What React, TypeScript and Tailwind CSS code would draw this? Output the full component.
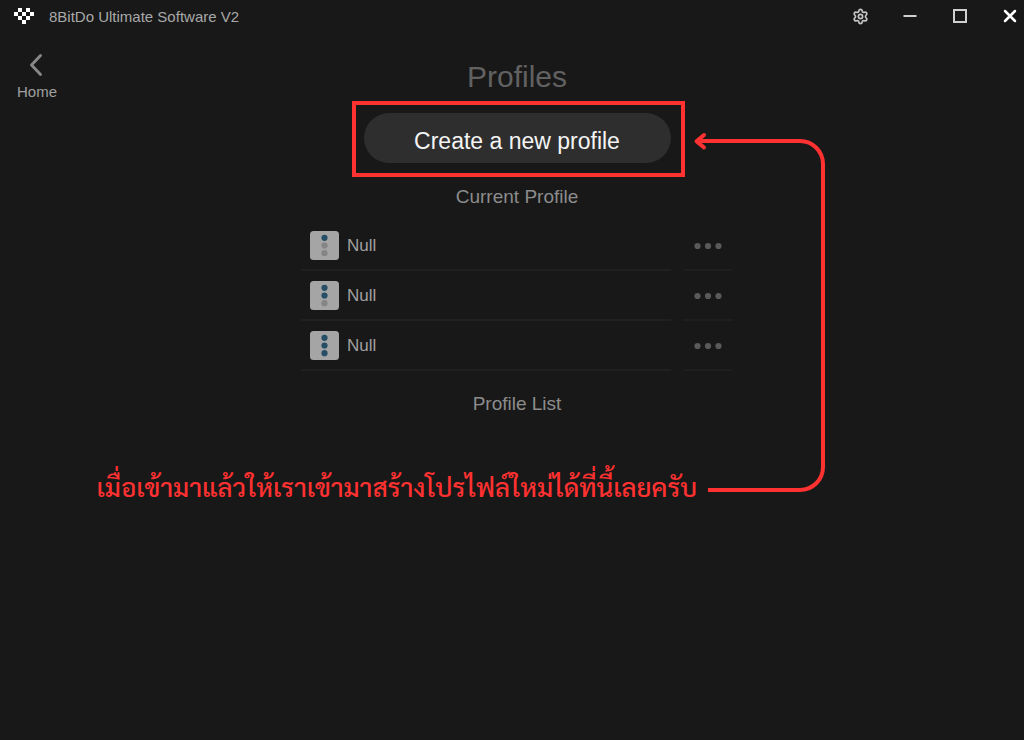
import { Settings } from 'lucide-react'

const SLOTS = [
  { id: 1, name: 'Null' },
  { id: 2, name: 'Null' },
  { id: 3, name: 'Null' },
]

const LOGO_CELLS = [
  [1, 0],
  [3, 0],
  [0, 1],
  [2, 1],
  [4, 1],
  [1, 2],
  [3, 2],
  [2, 3],
]

function Logo() {
  return (
    <svg viewBox="0 0 20 16" className="h-4 w-5 fill-white" shapeRendering="crispEdges" aria-hidden>
      {LOGO_CELLS.map(([x, y]) => (
        <rect key={`${x}-${y}`} x={x * 4} y={y * 4} width="4" height="4" />
      ))}
    </svg>
  )
}

function TitleBar() {
  const button = 'flex h-8 w-7 cursor-pointer items-center justify-center'

  return (
    <header className="flex h-8 items-center justify-between pl-3.5">
      <div className="flex items-center gap-[15px]">
        <Logo />
        <span className="pt-0.5 text-[15px] leading-6 text-[#a8a8a8]">8BitDo Ultimate Software V2</span>
      </div>
      <div className="flex gap-[22px]">
        <button className={button} aria-label="Settings">
          <Settings className="size-[17px] text-[#c4c4c4]" strokeWidth={2.4} aria-hidden />
        </button>
        <button className={button} aria-label="Minimize">
          <svg viewBox="0 0 14 14" className="size-3.5" aria-hidden>
            <path d="M.5 7h13" stroke="#d0d0d0" strokeWidth="2" />
          </svg>
        </button>
        <button className={button} aria-label="Maximize">
          <svg viewBox="0 0 14 14" className="size-3.5" aria-hidden>
            <path d="M1 1h12v12H1z" fill="none" stroke="#d0d0d0" strokeWidth="2" />
          </svg>
        </button>
        <button className={button} aria-label="Close">
          <svg viewBox="0 0 14 14" className="size-3.5" aria-hidden>
            <path d="M2 2l10 10M12 2L2 12" stroke="#fff" strokeWidth="2.5" strokeLinecap="round" />
          </svg>
        </button>
      </div>
    </header>
  )
}

function SlotBadge({ level }: { level: number }) {
  return (
    <svg viewBox="0 0 29 29" className="size-[29px]" aria-hidden>
      <rect width="29" height="29" rx="3.5" fill="#a5a5a5" />
      {[1, 2, 3].map((n) => (
        <circle key={n} cx="14.5" cy={n * 7.7 - 0.9} r="3.1" fill={n <= level ? '#264e66' : '#858585'} />
      ))}
    </svg>
  )
}

function SlotRow({ id, name }: { id: number; name: string }) {
  return (
    <li className="flex h-[50px] gap-3">
      <div className="flex flex-1 items-center gap-2 border-b-2 border-[#202020] pl-[9px]">
        <SlotBadge level={id} />
        <span className="pt-0.5 text-[17px] text-[#a0a0a0]">{name}</span>
      </div>
      <button
        className="flex w-[50px] cursor-pointer items-center justify-center border-b-2 border-[#1e1e1e] pt-px"
        aria-label={`More options for slot ${id}`}
      >
        <svg viewBox="0 0 28 8" className="h-2 w-7 fill-[#5a5a5a]" aria-hidden>
          <circle cx="3.5" cy="4" r="3.1" />
          <circle cx="14" cy="4" r="3.1" />
          <circle cx="24.5" cy="4" r="3.1" />
        </svg>
      </button>
    </li>
  )
}

export default function App() {
  return (
    <div className="min-h-screen bg-[#181818] font-['Liberation_Sans',Arial,sans-serif]">
      <TitleBar />

      <div className="grid grid-cols-[1fr_432px_1fr] pl-2.5">
        <nav className="pt-[22px] pl-[7px]">
          <a href="#home" className="inline-flex flex-col items-center text-[#a0a0a0]">
            <svg viewBox="0 0 12 22" className="mr-0.5 h-[22px] w-3" aria-hidden>
              <path
                d="M10.5 1.5L1.5 11l9 9.5"
                fill="none"
                stroke="#888"
                strokeWidth="2.8"
                strokeLinecap="round"
                strokeLinejoin="round"
              />
            </svg>
            <span className="mt-1 text-[15px] leading-6">Home</span>
          </a>
        </nav>

        <main className="relative flex flex-col items-center pt-[27px]">
          <h1 className="text-[30px] leading-9 text-[#616161]">Profiles</h1>

          <div className="relative mt-[18px]">
            <button className="h-[50px] w-[307px] cursor-pointer rounded-full bg-[#2e2e2e] pt-1.5 text-[23px] text-[#f4f4f4]">
              Create a new profile
            </button>
            {/* highlight frame */}
            <div className="pointer-events-none absolute -top-3 -right-3.5 -bottom-3.5 -left-3 border-4 border-[#ff3131]" />
          </div>

          <h2 className="mt-[22px] text-[19px] leading-6 text-[#8c8c8c]">Current Profile</h2>
          <ul className="mt-3 w-full">
            {SLOTS.map((slot) => (
              <SlotRow key={slot.id} {...slot} />
            ))}
          </ul>

          <h2 className="mt-[21px] text-[19px] leading-6 text-[#8c8c8c]">Profile List</h2>

          {/* callout and its arrow */}
          <p className="absolute top-[434px] right-9 font-[Sarabun,Waree,Loma,Garuda,sans-serif] text-[26px] leading-10 font-medium whitespace-nowrap text-[#ff3131]">
            เมื่อเข้ามาแล้วให้เราเข้ามาสร้างโปรไฟล์ใหม่ได้ที่นี้เลยครับ
          </p>
          <svg
            viewBox="0 0 134 364"
            className="pointer-events-none absolute top-[98px] left-[392px] h-[364px] w-[134px]"
            fill="none"
            stroke="#ff3131"
            strokeWidth="4"
            aria-hidden
          >
            <path d="M3 11H107a23 23 0 0 1 23 23V337a23 23 0 0 1-23 23H15" />
            <path d="M11 5L3.5 11.2 11 17.5" strokeLinecap="round" strokeLinejoin="round" />
          </svg>
        </main>
      </div>
    </div>
  )
}
